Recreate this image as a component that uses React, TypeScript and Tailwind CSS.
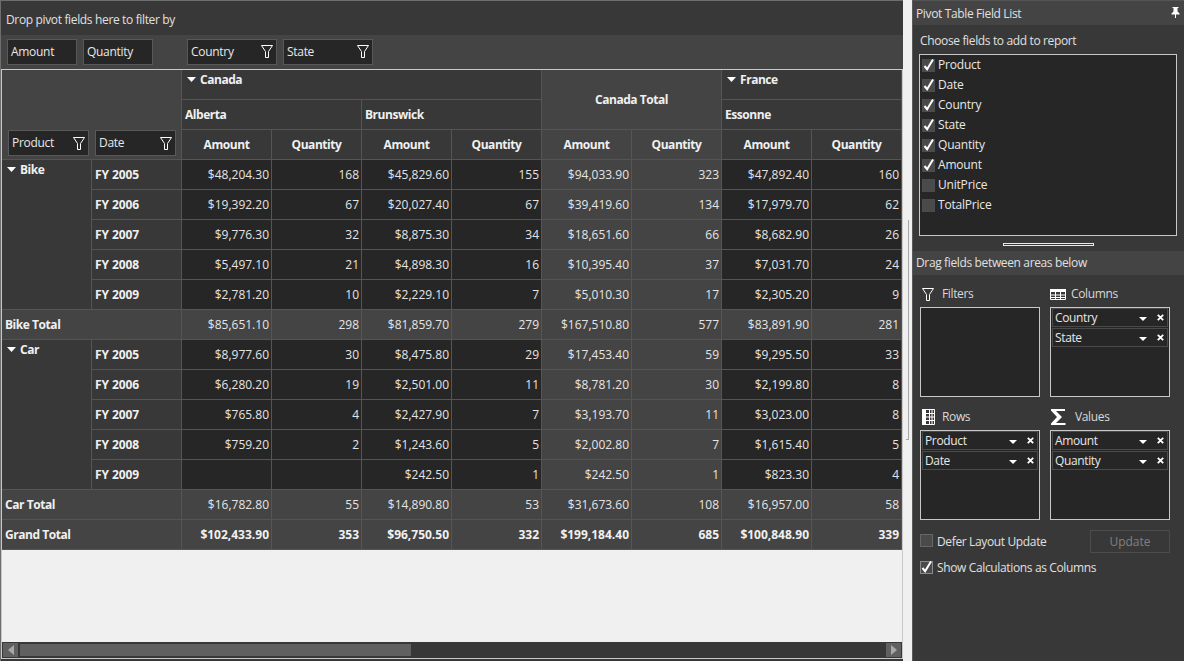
import { Fragment, type ReactNode } from 'react';

type Row = { label: string; values: string[] };

const BIKE: Row[] = [
  { label: 'FY 2005', values: ['$48,204.30', '168', '$45,829.60', '155', '$94,033.90', '323', '$47,892.40', '160'] },
  { label: 'FY 2006', values: ['$19,392.20', '67', '$20,027.40', '67', '$39,419.60', '134', '$17,979.70', '62'] },
  { label: 'FY 2007', values: ['$9,776.30', '32', '$8,875.30', '34', '$18,651.60', '66', '$8,682.90', '26'] },
  { label: 'FY 2008', values: ['$5,497.10', '21', '$4,898.30', '16', '$10,395.40', '37', '$7,031.70', '24'] },
  { label: 'FY 2009', values: ['$2,781.20', '10', '$2,229.10', '7', '$5,010.30', '17', '$2,305.20', '9'] },
];

const CAR: Row[] = [
  { label: 'FY 2005', values: ['$8,977.60', '30', '$8,475.80', '29', '$17,453.40', '59', '$9,295.50', '33'] },
  { label: 'FY 2006', values: ['$6,280.20', '19', '$2,501.00', '11', '$8,781.20', '30', '$2,199.80', '8'] },
  { label: 'FY 2007', values: ['$765.80', '4', '$2,427.90', '7', '$3,193.70', '11', '$3,023.00', '8'] },
  { label: 'FY 2008', values: ['$759.20', '2', '$1,243.60', '5', '$2,002.80', '7', '$1,615.40', '5'] },
  { label: 'FY 2009', values: ['', '', '$242.50', '1', '$242.50', '1', '$823.30', '4'] },
];

const BIKE_TOTAL = ['$85,651.10', '298', '$81,859.70', '279', '$167,510.80', '577', '$83,891.90', '281'];
const CAR_TOTAL = ['$16,782.80', '55', '$14,890.80', '53', '$31,673.60', '108', '$16,957.00', '58'];
const GRAND_TOTAL = ['$102,433.90', '353', '$96,750.50', '332', '$199,184.40', '685', '$100,848.90', '339'];

const MEASURES = ['Amount', 'Quantity', 'Amount', 'Quantity', 'Amount', 'Quantity', 'Amount', 'Quantity'];
const FIELDS = ['Product', 'Date', 'Country', 'State', 'Quantity', 'Amount', 'UnitPrice', 'TotalPrice'];

const LINE = 'border-r border-b border-[#555555]';
const HEAD_TEXT = 'font-bold text-[#f0f0f0] tracking-[-0.45px]';

function FunnelIcon() {
  return (
    <svg viewBox="0 0 12 13" className="w-[12px] h-[13px] shrink-0" fill="none" stroke="#ffffff" strokeWidth="1">
      <path d="M.5.5h11L7.500 6.500v6H4.500v-6z" />
    </svg>
  );
}

function Caret() {
  return (
    <svg viewBox="0 0 9 5" className="w-[9px] h-[5px] shrink-0" fill="#ffffff">
      <path d="M0 0h9L4.500 5z" />
    </svg>
  );
}

function Chip({ label, width, filter }: { label: string; width: string; filter?: boolean }) {
  return (
    <div className={`${width} h-[26px] bg-[#262626] border border-[#595959] flex items-center justify-between pl-[3px] pr-[3px] text-[#e8e8e8] tracking-[-0.3px]`}>
      <span>{label}</span>
      {filter && <FunnelIcon />}
    </div>
  );
}

function ValueCells({ values, total, bold }: { values: string[]; total?: boolean; bold?: boolean }) {
  return (
    <>
      {values.map((v, i) => (
        <div
          key={i}
          className={`${LINE} ${total || i === 4 || i === 5 ? 'bg-[#444444]' : 'bg-[#262626]'} ${bold ? 'font-bold text-[#f0f0f0]' : 'text-[#e4e4e4]'} flex items-center justify-end pr-[2px]`}
        >
          {v}
        </div>
      ))}
    </>
  );
}

function GroupRows({ name, rows }: { name: string; rows: Row[] }) {
  return (
    <>
      <div className={`${LINE} row-span-5 bg-[#383838] ${HEAD_TEXT} flex items-start gap-[4px] pl-[5px] pt-[2px]`}>
        <span className="mt-[5px]"><Caret /></span>
        <span>{name}</span>
      </div>
      {rows.map(r => (
        <Fragment key={r.label}>
          <div className={`${LINE} bg-[#383838] font-bold text-[#f0f0f0] tracking-[-0.1px] flex items-center pl-[3px]`}>{r.label}</div>
          <ValueCells values={r.values} />
        </Fragment>
      ))}
    </>
  );
}

function TotalRow({ label, values, bold }: { label: string; values: string[]; bold?: boolean }) {
  return (
    <>
      <div className={`${LINE} col-span-2 bg-[#444444] ${HEAD_TEXT} flex items-center pl-[3px]`}>{label}</div>
      <ValueCells values={values} total bold={bold} />
    </>
  );
}

function CountryHeader({ name, span }: { name: string; span: string }) {
  return (
    <div className={`${LINE} ${span} bg-[#383838] ${HEAD_TEXT} flex items-start gap-[4px] pl-[5px] pt-[2px]`}>
      <span className="mt-[5px]"><Caret /></span>
      <span>{name}</span>
    </div>
  );
}

function StateHeader({ name }: { name: string }) {
  return <div className={`${LINE} col-span-2 bg-[#383838] ${HEAD_TEXT} flex items-center pl-[3px]`}>{name}</div>;
}

function PivotGrid() {
  return (
    <div className="grid grid-cols-[repeat(10,90px)] auto-rows-[30px] w-[900px]">
      <div className={`${LINE} col-span-2 row-span-3 bg-[#444444] flex items-end gap-[6px] pl-[6px] pb-[3px]`}>
        <Chip label="Product" width="w-[81px]" filter />
        <Chip label="Date" width="w-[81px]" filter />
      </div>
      <CountryHeader name="Canada" span="col-span-4" />
      <div className={`${LINE} col-span-2 row-span-2 bg-[#444444] ${HEAD_TEXT} flex items-center justify-center`}>Canada Total</div>
      <CountryHeader name="France" span="col-span-2" />
      <StateHeader name="Alberta" />
      <StateHeader name="Brunswick" />
      <StateHeader name="Essonne" />
      {MEASURES.map((m, i) => (
        <div
          key={i}
          className={`${LINE} ${i === 4 || i === 5 ? 'bg-[#444444]' : 'bg-[#383838]'} ${HEAD_TEXT} flex items-center justify-center`}
        >
          {m}
        </div>
      ))}
      <GroupRows name="Bike" rows={BIKE} />
      <TotalRow label="Bike Total" values={BIKE_TOTAL} />
      <GroupRows name="Car" rows={CAR} />
      <TotalRow label="Car Total" values={CAR_TOTAL} />
      <TotalRow label="Grand Total" values={GRAND_TOTAL} bold />
    </div>
  );
}

function ScrollBar() {
  return (
    <div className="h-[16px] shrink-0 bg-[#383838] flex items-center gap-[2px] pl-[1px] pr-[1px]">
      <div className="w-[15px] h-[14px] bg-[#606060] flex items-center justify-center">
        <svg viewBox="0 0 6 10" className="w-[6px] h-[10px]" fill="#a8a8a8"><path d="M6 0v10L0 5z" /></svg>
      </div>
      <div className="flex-1 h-[14px] pt-[1px]">
        <div className="w-[391px] h-[12px] bg-[#606060]" />
      </div>
      <div className="w-[15px] h-[14px] bg-[#606060] flex items-center justify-center">
        <svg viewBox="0 0 6 10" className="w-[6px] h-[10px]" fill="#a8a8a8"><path d="M0 0v10l6-5z" /></svg>
      </div>
    </div>
  );
}

function CheckBox({ checked, className = '' }: { checked?: boolean; className?: string }) {
  return (
    <div className={`w-[13px] h-[13px] shrink-0 bg-[#4a4a4a] border border-[#4c4c4c] flex items-center justify-center ${className}`}>
      {checked && (
        <svg viewBox="0 0 13 13" className="w-[13px] h-[13px] shrink-0 overflow-visible" fill="none" stroke="#ffffff" strokeWidth="2">
          <path d="M2.500 7l2.600 3.200L11 .5" />
        </svg>
      )}
    </div>
  );
}

function ZoneItem({ label }: { label: string }) {
  return (
    <div className="h-[19px] mb-[1px] bg-[#262626] border border-[#4a4a4a] flex items-center pl-[2px] text-[#e8e8e8]">
      <span className="flex-1">{label}</span>
      <svg viewBox="0 0 8 4" className="w-[8px] h-[4px] mr-[10px] mt-[2px]" fill="#ffffff"><path d="M0 0h8L4 4z" /></svg>
      <svg viewBox="0 0 7 7" className="w-[7px] h-[7px] mr-[3px]" stroke="#ffffff" strokeWidth="1.800"><path d="M.8.8l5.400 5.400M6.200.8L.8 6.200" /></svg>
    </div>
  );
}

function Zone({ icon, title, gap, items = [] }: { icon: ReactNode; title: string; gap: string; items?: string[] }) {
  return (
    <div className="flex flex-col">
      <div className={`h-[23px] pb-[3px] flex items-center ${gap} text-[#d8d8d8]`}>
        <span className="w-[16px] flex justify-center">{icon}</span>
        <span>{title}</span>
      </div>
      <div className="h-[90px] bg-[#262626] border border-[#c8c8c8] px-[1px]">
        {items.map(i => <ZoneItem key={i} label={i} />)}
      </div>
    </div>
  );
}

function ColumnsIcon() {
  return (
    <svg viewBox="0 0 16 11" className="w-[16px] h-[11px]" fill="none" stroke="#ffffff">
      <path d="M.5.5h15v10H.5zM.5 6h15M.5 8.500h15M5.500 3v8M10.500 3v8" />
      <path d="M0 0h16v3H0z" fill="#ffffff" stroke="none" />
    </svg>
  );
}

function RowsIcon() {
  return (
    <svg viewBox="0 0 13 16" className="w-[13px] h-[16px]" fill="none" stroke="#ffffff">
      <path d="M.5.5h12v15H.5zM7.500 .5v15M10 .5v15M4 4.500h9M4 8h9M4 11.500h9" />
      <path d="M0 0h4v16H0z" fill="#ffffff" stroke="none" />
    </svg>
  );
}

function SigmaIcon() {
  return (
    <svg viewBox="0 0 15 16" className="w-[15px] h-[16px]" fill="#ffffff">
      <path d="M0 0h14v2H5l6 6-6 6h9.500v2H0v-1.500L6 8 0 1.500z" />
    </svg>
  );
}

function PinIcon() {
  return (
    <svg viewBox="0 0 9 11" className="w-[9px] h-[11px] mb-[2px]" fill="#ffffff">
      <path d="M1.500 0h6v1H6.500v3.500l2 2v1H5v3.500H4V7.500H.5v-1l2-2V1h-1z" />
    </svg>
  );
}

function FieldList() {
  return (
    <div className="w-[271px] h-full bg-[#383838] border-t border-[#555555] flex flex-col text-[#e0e0e0] tracking-[-0.36px]">
      <div className="h-[24px] bg-[#444444] flex items-center justify-between pl-[3px] pr-[4px] pt-[1px]">
        <span>Pivot Table Field List</span>
        <PinIcon />
      </div>
      <div className="h-[29px] flex items-center pl-[7px] pt-[2px]">Choose fields to add to report</div>
      <div className="h-[182px] ml-[6px] mr-[7px] bg-[#262626] border border-[#c8c8c8] pl-[2px] tracking-[-0.2px]">
        {FIELDS.map((f, i) => (
          <div key={f} className="h-[20px] flex items-center gap-[3px] text-[#e8e8e8]">
            <CheckBox checked={i < 6} />
            <span>{f}</span>
          </div>
        ))}
      </div>
      <div className="h-[15px] flex items-center justify-center pt-[1px]">
        <div className="w-[91px] h-[3px] border border-[#e8e8e8]" />
      </div>
      <div className="h-[24px] bg-[#444444] flex items-center pl-[3px]">Drag fields between areas below</div>
      <div className="grid grid-cols-[120px_120px] gap-x-[10px] gap-y-[10px] pl-[7px] pt-[9px]">
        <Zone icon={<FunnelIcon />} title="Filters" gap="gap-[6px]" />
        <Zone icon={<ColumnsIcon />} title="Columns" gap="gap-[5px]" items={['Country', 'State']} />
        <Zone icon={<RowsIcon />} title="Rows" gap="gap-[6px]" items={['Product', 'Date']} />
        <Zone icon={<SigmaIcon />} title="Values" gap="gap-[9px]" items={['Amount', 'Quantity']} />
      </div>
      <div className="flex items-center justify-between pl-[7px] pr-[14px] mt-[10px]">
        <div className="flex items-center gap-[4px]">
          <CheckBox className="border-[#666666] -mt-[2px]" />
          <span>Defer Layout Update</span>
        </div>
        <button className="w-[80px] h-[23px] border border-[#4c4c4c] text-[#808080] tracking-normal">Update</button>
      </div>
      <div className="flex items-center gap-[4px] pl-[7px] mt-[7px]">
        <CheckBox checked className="border-[#8a8a8a] -mt-[2px]" />
        <span>Show Calculations as Columns</span>
      </div>
    </div>
  );
}

export default function App() {
  return (
    <div className="w-[1184px] h-[661px] overflow-hidden bg-[#f0f0f0] flex font-['Open_Sans','Liberation_Sans',sans-serif] text-[12px] leading-[16px]">
      <div className="w-[903px] h-full bg-[#383838] border-t border-l border-[#6e6e6e] flex flex-col">
        <div className="h-[34px] shrink-0 flex items-center pl-[5px] pt-[3px] text-[#e0e0e0] tracking-[-0.35px]">Drop pivot fields here to filter by</div>
        <div className="h-[34px] shrink-0 bg-[#444444] flex items-center pl-[6px] pb-[1px]">
          <div className="flex gap-[6px]">
            <Chip label="Amount" width="w-[70px]" />
            <Chip label="Quantity" width="w-[70px]" />
          </div>
          <div className="flex gap-[6px] ml-[34px]">
            <Chip label="Country" width="w-[90px]" filter />
            <Chip label="State" width="w-[90px]" filter />
          </div>
        </div>
        <div className="flex-1 min-h-0 bg-[#f0f0f0] border border-[#c8c8c8] mb-[2px] flex flex-col">
          <div className="flex-1 min-h-0 overflow-hidden">
            <PivotGrid />
          </div>
          <ScrollBar />
        </div>
      </div>
      <div className="w-[10px] h-full border-r border-[#5a5a5a] flex items-center justify-center pb-[1px]">
        <div className="w-[3px] h-[220px] border-r border-b border-[#a8a8a8]" />
      </div>
      <FieldList />
    </div>
  );
}
